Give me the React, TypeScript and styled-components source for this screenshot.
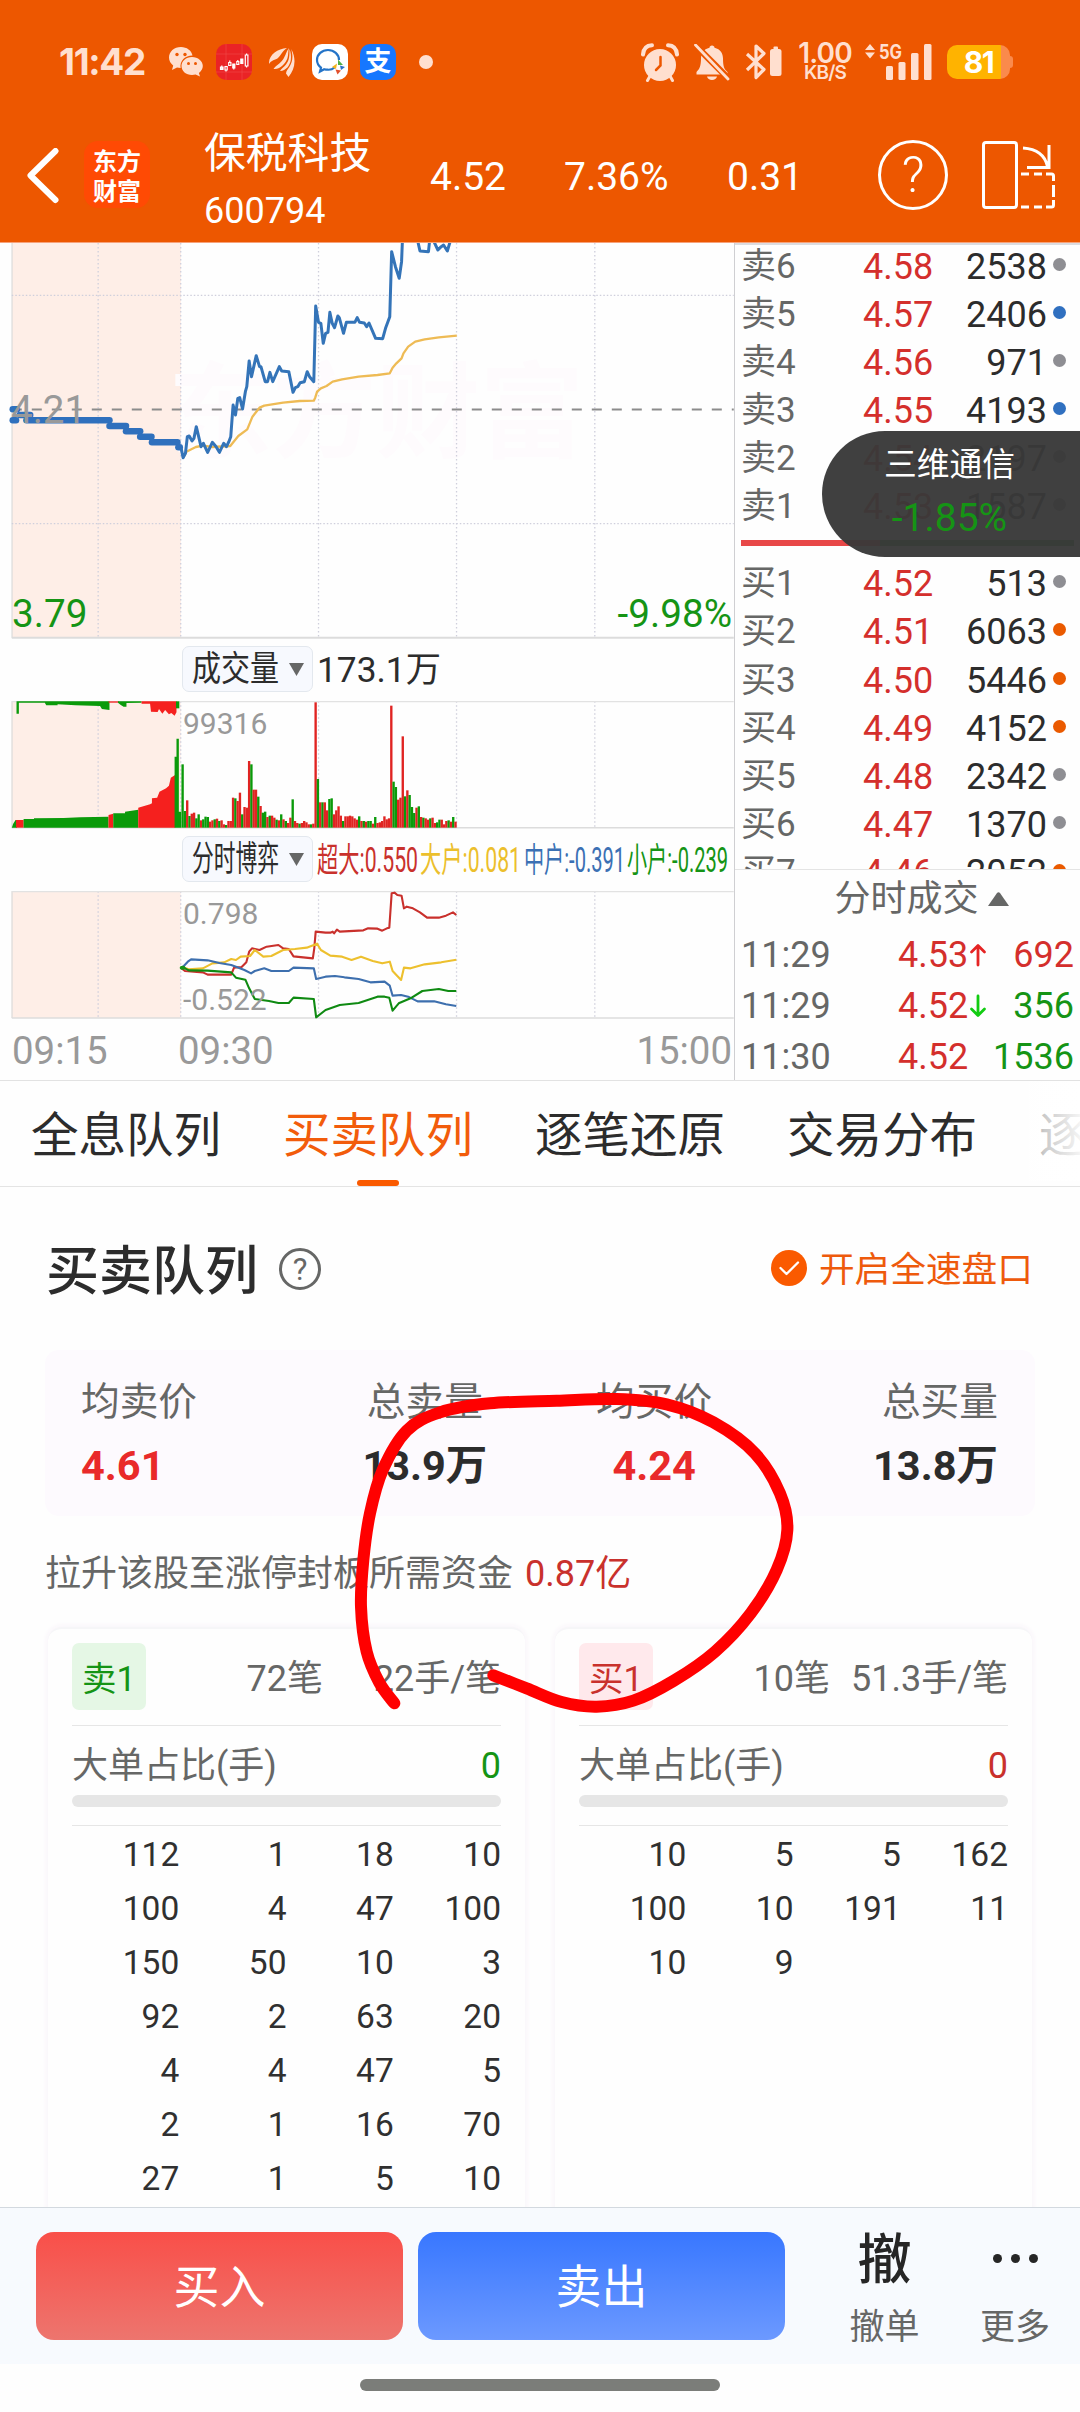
import React from "react";
import styled, { createGlobalStyle, css } from "styled-components";

const RED = "#c9312c";
const PRICE_RED = "#d42f2c";
const GREEN = "#159415";
const ORANGE = "#ed5700";
const GREY = "#666766";
const INK = "#2c2c2c";

const GlobalStyle = createGlobalStyle`
  html, body { margin: 0; padding: 0; background: #fff; }
  * { box-sizing: border-box; }
  body { font-family: Roboto, "Noto Sans CJK SC", sans-serif; }
`;

const Screen = styled.div`
  position: relative;
  width: 1080px;
  height: 2412px;
  overflow: hidden;
  display: flex;
  flex-direction: column;
  background: #fefefe;
  color: ${INK};
`;

/* ---------- status bar ---------- */

const StatusBar = styled.div`
  height: 124px;
  flex: none;
  display: flex;
  align-items: center;
  padding: 0 70px 0 59px;
  background: ${ORANGE};
  color: #ffdfcf;
`;

const Clock = styled.span`
  width: 109px;
  font: 700 37px/46px Inter, sans-serif;
  letter-spacing: -1.3px;
`;

const StatusGroup = styled.div<{ $gap: number }>`
  display: flex;
  align-items: center;
  gap: ${(p) => p.$gap}px;
`;

const Spacer = styled.div<{ $w?: number }>`
  flex: ${(p) => (p.$w ? `0 0 ${p.$w}px` : "1")};
`;

const AppTile = styled.div<{ $bg: string }>`
  width: 36px;
  height: 36px;
  border-radius: 10px;
  display: flex;
  align-items: center;
  justify-content: center;
  background: ${(p) => p.$bg};
`;

const StatusDot = styled.div`
  width: 14px;
  height: 14px;
  border-radius: 50%;
  background: #ffdfcf;
`;

const Speed = styled.div`
  width: 56px;
  display: flex;
  flex-direction: column;
  align-items: center;
  font-family: Inter, sans-serif;
  font-weight: 600;
  white-space: nowrap;
`;
const SpeedValue = styled.span`
  font-size: 28px;
  line-height: 21px;
  letter-spacing: -0.8px;
`;
const SpeedUnit = styled.span`
  font-size: 19px;
  line-height: 17px;
  letter-spacing: -0.8px;
`;

const Battery = styled.div`
  position: relative;
  width: 63px;
  height: 34px;
  border-radius: 10px;
  background: linear-gradient(90deg, #ffb300 0 54px, #fa8a4c 54px);
  color: #fff;
  font: 700 30px/34px Inter, sans-serif;
  letter-spacing: -1.5px;
  text-align: center;
  &::after {
    content: "";
    position: absolute;
    right: -3px;
    top: 11px;
    width: 3px;
    height: 12px;
    border-radius: 0 3px 3px 0;
    background: #fa8a4c;
  }
`;

/* ---------- title bar ---------- */

const TitleBar = styled.div`
  height: 119px;
  flex: none;
  display: flex;
  align-items: center;
  padding: 0 24px 15px 26px;
  background: ${ORANGE};
  color: #fff;
  border-bottom: 1px solid #f7a27a;
`;

const Brand = styled.div`
  width: 66px;
  height: 67px;
  margin: -2px 0 0 24px;
  border-radius: 14px;
  background: #ff4a04;
  display: flex;
  flex-direction: column;
  align-items: center;
  justify-content: center;
  font: 700 24px/30px "Noto Sans CJK SC", sans-serif;
`;

const StockName = styled.div`
  align-self: flex-start;
  width: 226px;
  margin-left: 54px;
  font-size: 41.8px;
  line-height: 60px;
  white-space: nowrap;
`;
const StockCode = styled.div`
  font-size: 36px;
  line-height: 55px;
`;
const HeadNumber = styled.div<{ $w: number }>`
  width: ${(p) => p.$w}px;
  padding-top: 2px;
  font-size: 39px;
  line-height: 46px;
`;
const HelpRing = styled.div`
  width: 70px;
  height: 70px;
  margin-top: -2px;
  border: 3px solid #fff;
  border-radius: 50%;
  text-align: center;
  font-size: 50px;
  font-weight: 300;
  line-height: 64px;
`;

/* ---------- quote area ---------- */

const QuoteArea = styled.div`
  height: 838px;
  flex: none;
  display: flex;
  border-bottom: 1px solid #e2e2e2;
`;

const ChartColumn = styled.div`
  width: 735px;
  border-right: 1px solid #cfcfd2;
  display: flex;
  flex-direction: column;
`;

const ChartBox = styled.div<{ $h: number }>`
  position: relative;
  height: ${(p) => p.$h}px;
  flex: none;
  svg { display: block; width: 734px; height: 100%; }
`;

const ChartLabel = styled.span<{ $size: number; $color: string; $top: number; $left?: number; $right?: number }>`
  position: absolute;
  top: ${(p) => p.$top}px;
  left: ${(p) => (p.$left === undefined ? "auto" : `${p.$left}px`)};
  right: ${(p) => (p.$right === undefined ? "auto" : `${p.$right}px`)};
  font-size: ${(p) => p.$size}px;
  line-height: ${(p) => p.$size}px;
  color: ${(p) => p.$color};
  white-space: nowrap;
`;
const Watermark = styled.span`
  position: absolute;
  left: 168px;
  top: 92px;
  font: 700 104px/140px "Noto Sans CJK SC", sans-serif;
  color: #fefbfd;
`;

const IndicatorRow = styled.div<{ $h: number; $pad: number }>`
  height: ${(p) => p.$h}px;
  flex: none;
  display: flex;
  align-items: flex-start;
  padding: ${(p) => p.$pad}px 0 0 182px;
`;

const Picker = styled.div`
  width: 131px;
  height: 46px;
  margin-right: 4px;
  padding: 0 8px 0 9px;
  border: 1px solid #e3e8ee;
  border-radius: 7px;
  background: #f7f9fe;
  display: flex;
  align-items: center;
  justify-content: space-between;
`;

const SqueezeBox = styled.span<{ $w: number }>`
  display: block;
  width: ${(p) => p.$w}px;
  height: 46px;
  line-height: 48px;
  white-space: nowrap;
`;
const SqueezeText = styled.span<{ $size: number; $scale: number; $color: string }>`
  display: inline-block;
  font-size: ${(p) => p.$size}px;
  color: ${(p) => p.$color};
  transform: scaleX(${(p) => p.$scale});
  transform-origin: 0 50%;
`;

const TimeAxis = styled.div`
  flex: 1;
  display: grid;
  grid-template-columns: 166px 1fr auto;
  padding: 10px 2px 0 12px;
  font-size: 38.4px;
  line-height: 44px;
  color: #999;
`;

/* ---------- order book ---------- */

const BookColumn = styled.div`
  flex: 1;
  display: flex;
  flex-direction: column;
  border-top: 2px solid #dcdce0;
`;

const BookList = styled.div`
  height: 625px;
  flex: none;
  overflow: hidden;
  border-bottom: 1px solid #e4e4e4;
`;

const BookRow = styled.div`
  height: 48.1px;
  display: grid;
  grid-template-columns: 121px 78px 106px 1fr;
  align-items: center;
  padding: 0 0 4.5px 7px;
  font-size: 36px;
  line-height: 40px;
`;
const Side = styled.span`
  font-size: 35px;
  margin-left: -1px;
  color: ${GREY};
`;
const Price = styled.span`
  color: ${PRICE_RED};
`;
const Volume = styled.span`
  text-align: right;
  color: ${INK};
`;
const LevelDot = styled.span<{ $c: string }>`
  width: 13px;
  height: 13px;
  margin: -5px 0 0 6px;
  border-radius: 50%;
  background: ${(p) => p.$c};
`;

const RatioBar = styled.div`
  height: 6px;
  margin: 6px 6px 17px 6px;
  background: linear-gradient(90deg, #e84848 0 139px, #1a8a1a 139px);
`;

const TradesTitle = styled.div`
  height: 58px;
  flex: none;
  display: flex;
  align-items: center;
  justify-content: center;
  gap: 9px;
  padding: 0 0 0 28px;
  font-size: 36px;
  line-height: 56px;
  color: ${GREY};
`;
const TradeRow = styled.div`
  height: 51px;
  flex: none;
  display: grid;
  grid-template-columns: 157px 71px 1fr auto;
  align-items: center;
  padding: 2px 6px 0 6px;
  font-size: 36px;
  line-height: 42px;
`;
const TradeTime = styled.span`
  color: ${GREY};
`;
const TradeVolume = styled.span<{ $c: string }>`
  color: ${(p) => p.$c};
`;

const FloatingQuote = styled.div`
  position: absolute;
  right: 0;
  top: 431px;
  width: 258px;
  height: 126px;
  padding: 4px 3px 0 0;
  border-radius: 63px 0 0 63px;
  background: rgba(57, 57, 57, 0.965);
  text-align: center;
  color: #fff;
`;
const FloatingName = styled.div`
  font-size: 32.8px;
  line-height: 60px;
`;
const FloatingChange = styled.div`
  font-size: 39px;
  line-height: 46px;
  color: ${GREEN};
`;

/* ---------- tabs ---------- */

const Tabs = styled.div`
  position: relative;
  height: 106px;
  flex: none;
  display: flex;
  gap: 62px;
  padding-left: 31px;
  overflow: hidden;
  border-bottom: 1px solid #e4e4e4;
  &::after {
    content: "";
    position: absolute;
    right: 0;
    top: 0;
    width: 80px;
    height: 100px;
    background: linear-gradient(90deg, rgba(255, 255, 255, 0), rgba(255, 255, 255, 0.75) 55%, rgba(255, 255, 255, 0.95));
  }
`;
const Tab = styled.div<{ $on?: boolean }>`
  flex: none;
  display: flex;
  flex-direction: column;
  align-items: center;
  font-size: 47.5px;
  line-height: 99px;
  padding-top: 6px;
  height: 105px;
  color: ${(p) => (p.$on ? "#f25c0b" : INK)};
  ${(p) =>
    p.$on &&
    css`
      &::after {
        content: "";
        width: 42px;
        height: 6px;
        flex: none;
        margin-top: -6px;
        border-radius: 3px;
        background: #fa5a00;
      }
    `}
`;

/* ---------- queue section ---------- */

const Section = styled.div`
  flex: 1;
  min-height: 0;
  overflow: hidden;
  padding: 0 45px;
`;
const SectionHead = styled.div`
  height: 163px;
  display: flex;
  align-items: center;
  padding: 0 2px 0 3px;
`;
const SectionTitle = styled.h2`
  margin: 7px 21px 0 -2px;
  font-size: 53px;
  font-weight: 500;
  line-height: 60px;
`;
const SmallRing = styled.span`
  width: 42px;
  height: 42px;
  border: 3px solid ${GREY};
  border-radius: 50%;
  text-align: center;
  font-size: 31px;
  line-height: 37px;
  color: ${GREY};
`;
const SpeedToggle = styled.div`
  margin-left: auto;
  padding-top: 4px;
  display: flex;
  align-items: center;
  gap: 12px;
  font-size: 35.7px;
  line-height: 43px;
  color: #ee5a0c;
  svg { margin-top: -6px; }
`;

const Summary = styled.div`
  height: 166px;
  display: grid;
  grid-template-columns: repeat(4, 229.25px);
  padding: 22px 0 0 36px;
  border-radius: 14px;
  background: #fdfafe;
`;
const SummaryCell = styled.div<{ $align: string }>`
  text-align: ${(p) => p.$align};
`;
const SummaryLabel = styled.div`
  font-size: 38.7px;
  line-height: 60px;
  color: ${GREY};
`;
const SummaryValue = styled.div<{ $c: string }>`
  font-size: 41.5px;
  font-weight: 700;
  line-height: 68px;
  color: ${(p) => p.$c};
`;
const Hint = styled.p`
  margin: 0;
  height: 111px;
  line-height: 116px;
  font-size: 36px;
  color: ${GREY};
  em {
    font-style: normal;
    color: ${RED};
    margin-left: 12px;
  }
`;

const Cards = styled.div`
  display: grid;
  grid-template-columns: 477px 477px;
  gap: 30px;
  padding: 0 3px;
`;
const Card = styled.div`
  height: 640px;
  padding: 14px 24px 0;
  border-radius: 14px;
  border-top: 2px solid #f6f6f8;
  background: #fefefe;
  box-shadow: 0 0 5px 2px #f9f5fa;
`;
const CardHead = styled.div`
  height: 83px;
  display: grid;
  grid-template-columns: 74px 177px 1fr;
  text-align: right;
  line-height: 73px;
  font-size: 36px;
  color: ${GREY};
  border-bottom: 1px solid #e6e6e6;
`;
const Badge = styled.span<{ $sell: boolean }>`
  width: 74px;
  height: 67px;
  border-radius: 7px;
  text-align: center;
  font-size: 34.5px;
  line-height: 72px;
  color: ${(p) => (p.$sell ? GREEN : RED)};
  background: ${(p) => (p.$sell ? "#e5f7e5" : "#ffe9ec")};
`;
const BigShare = styled.div`
  height: 69px;
  padding-top: 7px;
  display: flex;
  justify-content: space-between;
  font-size: 36px;
  line-height: 66px;
  color: ${GREY};
`;
const BigValue = styled.span<{ $c: string }>`
  color: ${(p) => p.$c};
`;
const Track = styled.div`
  height: 12px;
  border-radius: 6px;
  background: #e6e6e6;
`;
const Lots = styled.div`
  display: grid;
  grid-template-columns: repeat(4, 1fr);
  margin-top: 18px;
  padding-top: 2px;
  border-top: 1px solid #e6e6e6;
  text-align: right;
  font-size: 33.5px;
  line-height: 54px;
  color: #303030;
`;

/* ---------- bottom ---------- */

const TradeBar = styled.div`
  height: 157px;
  flex: none;
  display: flex;
  align-items: flex-start;
  padding: 24px 0 0 36px;
  background: #f7fafe;
  border-top: 1px solid #d3d9df;
`;
const TradeButton = styled.button<{ $from: string; $to: string }>`
  width: 367px;
  height: 108px;
  margin: 0 15px 0 0;
  padding: 3px 0 0;
  border: 0;
  border-radius: 18px;
  background: linear-gradient(${(p) => p.$from}, ${(p) => p.$to});
  color: #fff;
  font: 46px/105px Roboto, "Noto Sans CJK SC", sans-serif;
`;
const Action = styled.div<{ $w: number }>`
  width: ${(p) => p.$w}px;
  display: flex;
  flex-direction: column;
  align-items: center;
  font-size: 35px;
  line-height: 43px;
  color: ${GREY};
`;
const ActionMark = styled.div`
  height: 74px;
  font-size: 54px;
  font-weight: 500;
  line-height: 57px;
  color: #262626;
`;
const DotRow = styled.div`
  display: flex;
  gap: 9px;
  height: 74px;
  padding-top: 22px;
  i { width: 9px; height: 9px; border-radius: 50%; background: #262626; }
`;
const HomeArea = styled.div`
  height: 48px;
  flex: none;
  display: flex;
  justify-content: center;
  padding-top: 15px;
`;
const HomeBar = styled.div`
  width: 360px;
  height: 12px;
  border-radius: 6px;
  background: #7b7d79;
`;

const Annotation = styled.svg`
  position: absolute;
  left: 340px;
  top: 1380px;
  pointer-events: none;
`;

/* ---------- data ---------- */

type Level = [string, string, string, string];
const DOT: Record<string, string> = { g: "#8e8e93", b: "#3070c0", o: "#ea5a00" };

const SELLS: Level[] = [
  ["卖6", "4.58", "2538", "g"],
  ["卖5", "4.57", "2406", "b"],
  ["卖4", "4.56", "971", "g"],
  ["卖3", "4.55", "4193", "b"],
  ["卖2", "4.54", "2197", "g"],
  ["卖1", "4.53", "1587", "g"],
];
const BUYS: Level[] = [
  ["买1", "4.52", "513", "g"],
  ["买2", "4.51", "6063", "o"],
  ["买3", "4.50", "5446", "o"],
  ["买4", "4.49", "4152", "o"],
  ["买5", "4.48", "2342", "g"],
  ["买6", "4.47", "1370", "g"],
  ["买7", "4.46", "2052", "o"],
];

const LEGEND: [string, string][] = [
  ["超大:0.550", RED],
  ["大户:0.081", "#ecbf2c"],
  ["中户:-0.391", "#3b70b4"],
  ["小户:-0.239", GREEN],
];

const SELL_LOTS = "112 1 18 10 100 4 47 100 150 50 10 3 92 2 63 20 4 4 47 5 2 1 16 70 27 1 5 10".split(" ");
const BUY_LOTS = "10 5 5 162 100 10 191 11 10 9".split(" ");

const PRICE_LINE =
  "384,640 388,668 393,655 397,605 401,603 407,618 411,610 416,575 421,605 426,635 431,625 440,652 450,622 458,635 465,652 474,625 480,635 485,620 489,605 494,510 499,540 504,490 508,488 514,522 520,470 523,455 528,378 533,425 543,362 550,395 553,395 562,440 567,440 572,412 578,440 592,395 597,408 612,410 621,472 626,458 631,455 636,443 645,440 651,410 656,425 665,440 669,213 675,262 680,265 685,325 690,295 695,292 699,232 704,265 709,278 716,243 719,248 728,295 734,262 752,262 757,248 762,262 772,264 777,275 782,264 796,310 811,311 817,280 826,245 830,50 838,95 846,130 851,80 853,10 884,10 890,48 908,50 911,10 918,15 928,45 935,35 940,30 948,48 956,10";
const AVERAGE_LINE =
  "388,668 395,650 415,636 430,632 450,636 488,633 505,603 524,583 535,545 550,518 560,512 600,503 635,498 665,497 668,488 672,470 680,460 692,453 705,440 725,433 760,425 800,420 826,415 832,398 840,385 851,370 855,355 865,335 880,320 900,313 930,307 968,302";
const AUCTION_STEPS: [number, number, number][] = [
  [27, 36, 523], [42, 64, 540], [27, 34, 556], [56, 232, 556], [232, 267, 573],
  [267, 297, 589], [297, 321, 605], [322, 376, 622], [378, 381, 637],
];

const VOLUMES =
  "190g 50g 82r 35g 42r 45r 28g 40g 22r 25g 33g 32g 18r 22r 25g 27r 20g 22r 10r 8g 20r 20r 90r 88g 80r 105r 40g 62r 60r 200r 190g 114r 114r 93g 65r 45g 48g 32r 36g 36r 30r 24g 22r 40g 25r 20g 14r 30r 85g 20r 14r 12g 14r 20r 16r 10r 10g 12r 376r 146g 76r 76g 76r 52r 86g 88g 40r 52r 64r 36r 20g 34r 34r 36r 34r 28r 24r 34g 20r 20g 18r 20g 20g 12r 32g 14r 16r 20r 34r 25r 28r 366r 138g 122g 84r 90r 274r 94g 112r 98g 62g 44g 60r 64g 32r 30g 28r 24r 28g 30r 14r 16g 24g 24r 10r 20r 22g 18r 32g 18r".split(" ");

const BAR_RED = "#f5201e";
const BAR_GREEN = "#0a9a0a";

const AUCTION_AREA: [string, string][] = [
  [BAR_GREEN, "25,578 28,566 33,555 36,555 36,578"],
  [BAR_RED, "34,578 34,555 50,555 50,578"],
  [BAR_GREEN, "50,578 50,552 72,552 72,550 135,549 170,547 230,545 230,578"],
  [BAR_RED, "230,578 230,540 240,536 240,578"],
  [BAR_GREEN, "240,578 240,535 265,535 265,530 293,524 293,578"],
  [BAR_RED, "293,578 293,518 318,508 322,505 322,490 333,488 338,470 352,460 358,452 362,428 371,420 371,578"],
  [BAR_GREEN, "370,578 370,365 374,365 374,311 379,311 379,530 384,530 384,578"],
  [BAR_GREEN, "25,199 35,199 35,236 40,236 40,203 95,203 98,211 122,211 122,208 160,211 212,213 216,222 232,225 232,199"],
  [BAR_RED, "230,199 230,203 252,203 252,199"],
  [BAR_GREEN, "250,199 250,203 256,210 262,215 268,215 268,204 300,203 300,199"],
  [BAR_RED, "300,199 300,206 318,206 320,230 334,231 337,222 344,236 350,225 358,238 363,234 370,242 374,232 374,199"],
  [BAR_GREEN, "373,199 373,220 380,220 380,199"],
];

const FLOW_LINES: [string, string][] = [
  ["#c9302c", "385,1000 392,1008 430,1012 440,1019 490,1019 496,998 512,996 522,982 528,950 534,940 550,945 565,935 590,930 600,940 612,942 622,964 663,970 666,940 669,890 690,893 700,893 705,890 708,895 714,884 720,890 770,886 780,880 800,881 810,887 820,880 825,878 830,775 836,773 842,780 851,782 856,820 862,815 875,820 890,832 905,848 930,848 945,842 960,832 967,840"],
  ["#edc02e", "387,997 400,1003 430,1000 450,985 475,982 490,972 500,975 510,965 530,963 540,945 558,965 575,963 600,945 625,942 650,938 672,926 680,945 700,962 725,965 745,975 765,965 790,978 810,985 826,980 832,1008 850,1035 856,998 870,1000 900,988 935,982 967,974"],
  ["#3d6fae", "387,997 398,980 405,973 440,976 465,984 490,990 500,995 518,1005 532,1015 540,1008 560,1000 575,1008 612,1008 622,998 665,1000 670,1032 690,1025 710,1023 730,1027 760,1032 785,1042 815,1040 826,1052 832,1082 850,1080 865,1085 885,1099 920,1099 945,1108 967,1113"],
  ["#0f8a12", "385,995 400,1006 440,1007 490,1012 500,1028 520,1034 528,1060 540,1092 570,1098 590,1104 612,1104 622,1088 665,1092 670,1147 690,1125 720,1110 760,1104 800,1085 815,1085 825,1088 832,1127 845,1105 870,1090 895,1068 930,1062 950,1068 967,1068"],
];

const LOOP: [number, number][] = [
  [163, 970], [118, 908], [80, 815], [63, 680], [70, 540], [90, 400], [128, 270], [200, 152], [300, 97],
  [450, 70], [650, 62], [830, 57], [980, 73], [1120, 127], [1245, 220], [1320, 340], [1342, 450],
  [1310, 570], [1232, 700], [1125, 815], [1000, 903], [880, 962], [770, 980], [665, 966], [560, 925], [460, 886],
];

/* Catmull-Rom spline through the given points */
function spline(pts: [number, number][]) {
  let d = `M${pts[0][0]} ${pts[0][1]}`;
  for (let i = 0; i < pts.length - 1; i++) {
    const a = pts[Math.max(0, i - 1)];
    const b = pts[i];
    const c = pts[i + 1];
    const e = pts[Math.min(pts.length - 1, i + 2)];
    d += `C${b[0] + (c[0] - a[0]) / 6} ${b[1] + (c[1] - a[1]) / 6} ${c[0] - (e[0] - b[0]) / 6} ${c[1] - (e[1] - b[1]) / 6} ${c[0]} ${c[1]}`;
  }
  return d;
}

/* ---------- drawings ---------- */

const WeChat = () => (
  <svg width="36" height="32" viewBox="0 0 36 32" fill="#ffdfcf">
    <path d="M13 1C6 1 1 5.700 1 11.500c0 3.300 1.600 6 4.200 8L4 24l5-2.600c1.300.300 2.400.500 3.600.500C11.500 15 17 9.500 24.500 9.500 23.500 4.500 18.800 1 13 1z" />
    <path d="M24 11c-6 0-10.500 4-10.500 9s4.500 9 10.500 9c1.300 0 2.500-.200 3.600-.500L32 30.500l-1.100-3.600c2.400-1.700 3.900-4.100 3.900-6.900 0-5-4.800-9-10.800-9z" />
    <g fill={ORANGE}>
      <circle cx="9" cy="8.500" r="1.700" />
      <circle cx="17" cy="8.500" r="1.700" />
      <circle cx="20.500" cy="17.500" r="1.500" />
      <circle cx="27.500" cy="17.500" r="1.500" />
    </g>
  </svg>
);

const Candles = () => (
  <svg width="36" height="36" viewBox="0 0 36 36" fill="none" stroke="#fff" strokeWidth="1.200">
    <path d="M0 10h36M0 28h36M10 0v36M26 0v36" stroke="#f04a49" strokeWidth=".6" />
    <path d="M4.500 23h2.500v2.500H4.500zM5.800 21.500v4" />
    <path d="M9 22.500h2.200v3.500H9zM10 26v1.500M12.700 18.500h2.200v3h-2.200zM13.800 16.500v2" />
    <path d="M16.800 20h2v4h-2zM17.800 24v1.500" fill="#fff" />
    <path d="M20.800 17.500h2v3h-2zM21.800 16v1.500" />
    <path d="M24.800 15h2v4.500h-2z" fill="#fff" />
    <path d="M29.300 11h2.600v11h-2.600zM30.600 9.500V11M30.600 22v1.500" />
  </svg>
);

const Wing = () => (
  <svg width="27" height="31" viewBox="0 0 27 31" fill="#ffdfcf">
    <path d="M0 17C-.5 8 8 2 18 1c-5 3-5.500 7-9 10-2.500 2.200-7 2-9 6z" />
    <path d="M20 1c-3 4-3 7-6 11.500S7 18 4.500 22C11 23 17 16 18.500 11c1-4 .5-7 1.500-10z" />
    <path d="M20.500 2c0 7 0 11-3.500 15.500-2 2.500-4.500 4-6 6.500 6 0 10-6 10.800-11 .5-4 0-8-1.300-11z" />
    <path d="M22.300 2c2 8 1.300 13-2 18-1.300 2-3 3.500-3.300 6.500l2.500 3.500c6-7 8.500-17 2.800-28z" />
  </svg>
);

const WeCom = () => (
  <svg width="32" height="30" viewBox="0 0 32 30" fill="none">
    <path d="M20.500 20.500c-2 1.800-4.200 2.500-7 2.200-1.300 0-2.300-.200-3.300-.500L6 24.500l1-3.800C4.300 18.500 3 15.800 3 13 3 7.200 8 3 14 3s11 4.200 11 10" stroke="#2474c8" strokeWidth="2.200" />
    <path d="M18 20l5-3.500-1 5.500z" fill="#f5b41a" />
    <path d="M24 12.500l5 5.500h-5z" fill="#4fae45" />
    <path d="M26 18.500l5 1.500-4 3z" fill="#2a70c8" />
    <path d="M21.500 22.500l5.500 1-3.500 4z" fill="#e2502c" />
  </svg>
);

const Alipay = styled.span`
  font: 700 27px/40px "Noto Sans CJK SC", sans-serif;
  margin-top: -4px;
  color: #fff;
`;

const Alarm = () => (
  <svg width="38" height="39" viewBox="0 0 38 39" fill="#ffdfcf">
    <circle cx="19" cy="22" r="16" />
    <path d="M2 11.500C2.500 5.500 6 2.500 11 2.300M36 11.500C35.500 5.500 32 2.500 27 2.300" stroke="#ffdfcf" strokeWidth="4" fill="none" strokeLinecap="round" />
    <path d="M9 33l-2.500 4.500M29 33l2.500 4.500" stroke="#ffdfcf" strokeWidth="3" strokeLinecap="round" />
    <path d="M19.500 14v8.500L15 27" stroke={ORANGE} strokeWidth="2.500" fill="none" strokeLinecap="round" />
  </svg>
);

const BellOff = () => (
  <svg width="36" height="37" viewBox="0 0 36 37" fill="#ffdfcf">
    <path d="M18 1.500c-1.500 0-2.500 1-2.500 2.200C9.500 5 7 9.500 7 14.500 7 22 5.500 25 2.500 28v2.500h31V28C30 25 29 22 29 14.500c0-5-2.500-9.500-8.500-10.800 0-1.200-1-2.200-2.500-2.200zM13 32.500c.5 2 2.500 3.500 5 3.500s4.500-1.500 5-3.500z" />
    <path d="M-1 -1L36 36" stroke={ORANGE} strokeWidth="6.500" />
    <path d="M1.500 1L34 35" stroke="#ffdfcf" strokeWidth="2.800" strokeLinecap="round" />
  </svg>
);

const Bluetooth = () => (
  <svg width="37" height="38" viewBox="0 0 37 38" fill="none" stroke="#ffdfcf" strokeWidth="3.200">
    <path d="M2 11l17 15.500L11 34.500V3l8 7.500L2 27" strokeLinejoin="round" />
    <rect x="25" y="6" width="11.500" height="27" rx="2.500" fill="#ffdfcf" stroke="none" />
    <rect x="28.500" y="3.500" width="4.500" height="4" rx="1" fill="#ffdfcf" stroke="none" />
  </svg>
);

const Signal = () => (
  <svg width="68" height="38" viewBox="0 0 68 38" fill="#ffdfcf">
    <path d="M1 7l5-6 5 6zM1 9.500l5 6 5-6z" />
    <text x="15" y="16" fontFamily="Inter, sans-serif" fontWeight="700" fontSize="19.500" textLength="23" lengthAdjust="spacingAndGlyphs">5G</text>
    <rect x="22" y="23" width="7" height="14" rx="1.500" />
    <rect x="34.500" y="19" width="7" height="18" rx="1.500" />
    <rect x="47" y="10" width="7.500" height="27" rx="1.500" />
    <rect x="60" y="1" width="7.500" height="36" rx="1.500" />
  </svg>
);

const Back = () => (
  <svg width="34" height="56" viewBox="0 0 34 56" fill="none" stroke="#fff" strokeWidth="6" strokeLinecap="round" strokeLinejoin="round">
    <path d="M29.500 3L4.500 27.500l25 24.500" />
  </svg>
);

const Rotate = styled.svg`
  margin: -2px 0 0 34px;
`;

const Grid = ({ top, bottom }: { top: number; bottom: number }) => (
  <>
    {[208, 383, 675, 967.5, 1260.5].map((x) => (
      <line key={x} x1={x} x2={x} y1={top} y2={bottom} stroke="#cfcfdc" strokeDasharray="1.500 2.500" strokeWidth="1.300" vectorEffect="non-scaling-stroke" />
    ))}
    <line x1="25.500" x2="25.500" y1={top} y2={bottom} stroke="#dadada" strokeWidth="1.200" vectorEffect="non-scaling-stroke" />
  </>
);

const Frame = ({ top, bottom }: { top: number; bottom: number }) => (
  <>
    <rect x="25" y={top} width="358" height={bottom - top} fill="#feeee7" />
    <Grid top={top} bottom={bottom} />
  </>
);

const line = { fill: "none", vectorEffect: "non-scaling-stroke", strokeLinejoin: "round" } as const;

function PriceChart() {
  return (
    <svg viewBox="0 24 1555.500 1191" preserveAspectRatio="none">
      <Grid top={24} bottom={1208} />
      {[181, 866].map((y) => (
        <line key={y} x1="25" x2="1555" y1={y} y2={y} stroke="#cfcfdc" strokeDasharray="1.500 2" strokeWidth="1.300" vectorEffect="non-scaling-stroke" />
      ))}
      <line x1="25" x2="1555" y1="523.500" y2="523.500" stroke="#8c8c8c" strokeDasharray="10 10" strokeWidth="2" vectorEffect="non-scaling-stroke" />
      <polyline points={AVERAGE_LINE} {...line} stroke="#eebb55" strokeWidth="2.300" />
      {AUCTION_STEPS.map(([a, b, y]) => (
        <line key={`${a}-${y}`} x1={a} x2={b} y1={y} y2={y} stroke="#2f70bd" strokeWidth="6.500" strokeLinecap="round" vectorEffect="non-scaling-stroke" />
      ))}
      <polyline points={PRICE_LINE} {...line} stroke="#3474b8" strokeWidth="3" />
      <line x1="25" x2="1555" y1="1208.500" y2="1208.500" stroke="#dcdcdc" strokeWidth="2" vectorEffect="non-scaling-stroke" />
    </svg>
  );
}

function VolumeChart() {
  return (
    <svg viewBox="0 198 1555.500 384" preserveAspectRatio="none">
      <Frame top={199} bottom={578} />
      <line x1="25" x2="1555" y1="200" y2="200" stroke="#e2e2e2" strokeWidth="1.200" vectorEffect="non-scaling-stroke" />
      <line x1="25" x2="1555" y1="578.500" y2="578.500" stroke="#dcdcdc" strokeWidth="1.500" vectorEffect="non-scaling-stroke" />
      {AUCTION_AREA.map(([c, p]) => (
        <polygon key={p} points={p} fill={c} />
      ))}
      {VOLUMES.map((v, i) => {
        const h = parseInt(v, 10);
        return <rect key={i} x={384.5 + i * 4.86} y={578 - h} width="5" height={h} fill={v.endsWith("r") ? "#e02422" : BAR_GREEN} />;
      })}
    </svg>
  );
}

function FlowChart() {
  return (
    <svg viewBox="0 768 1555.500 384" preserveAspectRatio="none">
      <Frame top={769} bottom={1149} />
      <line x1="25" x2="1555" y1="770" y2="770" stroke="#e2e2e2" strokeWidth="1.200" vectorEffect="non-scaling-stroke" />
      <line x1="25" x2="1555" y1="1149" y2="1149" stroke="#dcdcdc" strokeWidth="1.500" vectorEffect="non-scaling-stroke" />
      {FLOW_LINES.map(([c, p]) => (
        <polyline key={c} points={p} {...line} stroke={c} strokeWidth="2.100" />
      ))}
      <circle cx="387" cy="998" r="6" fill={GREEN} />
    </svg>
  );
}

const PinkBack = styled.div`
  position: absolute;
  left: 12px;
  top: 0;
  width: 169px;
  height: 394px;
  background: #feeee7;
`;
const Layer = styled.div`
  position: absolute;
  inset: 0;
`;

const Caret = () => (
  <svg width="15" height="13" viewBox="0 0 15 13">
    <path d="M0 0h15L7.500 13z" fill={GREY} />
  </svg>
);

const Arrow = ({ up }: { up: boolean }) => (
  <svg width="18" height="24" viewBox="0 0 18 24" fill="none" stroke={up ? "#e52424" : "#12cc12"} strokeWidth="2.800" strokeLinecap="round" strokeLinejoin="round">
    <path d={up ? "M9 22V3M2.500 9L9 2.500 15.500 9" : "M9 2v19M2.500 15L9 21.500 15.500 15"} />
  </svg>
);

function Book({ rows }: { rows: Level[] }) {
  return (
    <>
      {rows.map(([side, price, vol, dot]) => (
        <BookRow key={side}>
          <Side>{side}</Side>
          <Price>{price}</Price>
          <Volume>{vol}</Volume>
          <LevelDot $c={DOT[dot]} />
        </BookRow>
      ))}
    </>
  );
}

function QueueCard({ sell, name, count, avg, lots }: { sell: boolean; name: string; count: string; avg: string; lots: string[] }) {
  return (
    <Card>
      <CardHead>
        <Badge $sell={sell}>{name}</Badge>
        <span>{count}</span>
        <span>{avg}</span>
      </CardHead>
      <BigShare>
        <span>大单占比(手)</span>
        <BigValue $c={sell ? GREEN : RED}>0</BigValue>
      </BigShare>
      <Track />
      <Lots>
        {lots.map((n, i) => (
          <span key={i}>{n}</span>
        ))}
      </Lots>
    </Card>
  );
}

export default function App() {
  return (
    <Screen lang="zh-CN">
      <GlobalStyle />
      <StatusBar>
        <Clock>11:42</Clock>
        <StatusGroup $gap={12}>
          <WeChat />
          <AppTile $bg="#ea2326"><Candles /></AppTile>
        </StatusGroup>
        <Spacer $w={17} />
        <Wing />
        <Spacer $w={16} />
        <StatusGroup $gap={12}>
          <AppTile $bg="#fff"><WeCom /></AppTile>
          <AppTile $bg="#1677ff"><Alipay>支</Alipay></AppTile>
        </StatusGroup>
        <Spacer $w={23} />
        <StatusDot />
        <Spacer />
        <StatusGroup $gap={15}>
          <Alarm />
          <BellOff />
          <Bluetooth />
          <Speed>
            <SpeedValue>1.00</SpeedValue>
            <SpeedUnit>KB/S</SpeedUnit>
          </Speed>
        </StatusGroup>
        <Spacer $w={11} />
        <Signal />
        <Spacer $w={15} />
        <Battery>81</Battery>
      </StatusBar>

      <TitleBar>
        <Back />
        <Brand>
          <span>东方</span>
          <span>财富</span>
        </Brand>
        <StockName>
          保税科技
          <StockCode>600794</StockCode>
        </StockName>
        <HeadNumber $w={134}>4.52</HeadNumber>
        <HeadNumber $w={163}>7.36%</HeadNumber>
        <HeadNumber $w={151}>0.31</HeadNumber>
        <HelpRing>?</HelpRing>
        <Rotate width="74" height="70" viewBox="0 0 74 70" fill="none" stroke="#fff" strokeWidth="3">
          <rect x="1.500" y="2.500" width="33" height="65" rx="2.500" />
          <path d="M41 8c14 1 22 7 24.500 18.500M67 5v23.500M45 27.500h23.500" />
          <path d="M39 34h8M52 34h8M64 34h5.500q2 0 2 2v5M71.500 45v12M71.500 60v5q0 2-2 2H64M52 67h8M39 67h8" />
        </Rotate>
      </TitleBar>

      <QuoteArea>
        <ChartColumn>
          <ChartBox $h={397}>
            <PinkBack />
            <Watermark>东方财富</Watermark>
            <Layer>
              <PriceChart />
            </Layer>
            <ChartLabel $size={38.5} $color="#999" $left={11} $top={148}>4.21</ChartLabel>
            <ChartLabel $size={38.7} $color={GREEN} $left={12} $top={352}>3.79</ChartLabel>
            <ChartLabel $size={38.7} $color={GREEN} $right={2} $top={352}>-9.98%</ChartLabel>
          </ChartBox>
          <IndicatorRow $h={61} $pad={6}>
            <Picker>
              <SqueezeBox $w={87}>
                <SqueezeText $size={35} $scale={0.83} $color={INK}>成交量</SqueezeText>
              </SqueezeBox>
              <Caret />
            </Picker>
            <SqueezeBox $w={130}>
              <SqueezeText $size={35.3} $scale={1} $color={INK}>173.1万</SqueezeText>
            </SqueezeBox>
          </IndicatorRow>
          <ChartBox $h={128}>
            <VolumeChart />
            <ChartLabel $size={30} $color="#999" $left={183} $top={8}>99316</ChartLabel>
          </ChartBox>
          <IndicatorRow $h={62} $pad={7}>
            <Picker>
              <SqueezeBox $w={87}>
                <SqueezeText $size={35} $scale={0.622} $color={INK}>分时博弈</SqueezeText>
              </SqueezeBox>
              <Caret />
            </Picker>
            {LEGEND.map(([t, c], i) => (
              <SqueezeBox key={t} $w={[103, 103.5, 103, 103][i]}>
                <SqueezeText $size={34.5} $scale={i < 2 ? 0.616 : 0.583} $color={c}>{t}</SqueezeText>
              </SqueezeBox>
            ))}
          </IndicatorRow>
          <ChartBox $h={128}>
            <FlowChart />
            <ChartLabel $size={30} $color="#999" $left={183} $top={8}>0.798</ChartLabel>
            <ChartLabel $size={30} $color="#999" $left={183} $top={94}>-0.522</ChartLabel>
          </ChartBox>
          <TimeAxis>
            <span>09:15</span>
            <span>09:30</span>
            <span>15:00</span>
          </TimeAxis>
        </ChartColumn>

        <BookColumn>
          <BookList>
            <Book rows={SELLS} />
            <RatioBar />
            <Book rows={BUYS} />
          </BookList>
          <TradesTitle>
            分时成交
            <svg width="21" height="14" viewBox="0 0 21 14">
              <path d="M0 14h21L12 1q-1.500-1.500-3 0z" fill={GREY} />
            </svg>
          </TradesTitle>
          <TradeRow>
            <TradeTime>11:29</TradeTime>
            <Price>4.53</Price>
            <Arrow up />
            <TradeVolume $c={PRICE_RED}>692</TradeVolume>
          </TradeRow>
          <TradeRow>
            <TradeTime>11:29</TradeTime>
            <Price>4.52</Price>
            <Arrow up={false} />
            <TradeVolume $c={GREEN}>356</TradeVolume>
          </TradeRow>
          <TradeRow>
            <TradeTime>11:30</TradeTime>
            <Price>4.52</Price>
            <span />
            <TradeVolume $c={GREEN}>1536</TradeVolume>
          </TradeRow>
        </BookColumn>
      </QuoteArea>

      <Tabs>
        <Tab>全息队列</Tab>
        <Tab $on>买卖队列</Tab>
        <Tab>逐笔还原</Tab>
        <Tab>交易分布</Tab>
        <Tab>逐</Tab>
      </Tabs>

      <Section>
        <SectionHead>
          <SectionTitle>买卖队列</SectionTitle>
          <SmallRing>?</SmallRing>
          <SpeedToggle>
            <svg width="36" height="36" viewBox="0 0 36 36">
              <circle cx="18" cy="18" r="18" fill="#fa5a00" />
              <path d="M9.500 18l6 6L27 12.500" fill="none" stroke="#fff" strokeWidth="2.300" strokeLinecap="round" strokeLinejoin="round" />
            </svg>
            开启全速盘口
          </SpeedToggle>
        </SectionHead>
        <Summary>
          <SummaryCell $align="left">
            <SummaryLabel>均卖价</SummaryLabel>
            <SummaryValue $c="#e92a2a">4.61</SummaryValue>
          </SummaryCell>
          <SummaryCell $align="center">
            <SummaryLabel>总卖量</SummaryLabel>
            <SummaryValue $c={INK}>13.9万</SummaryValue>
          </SummaryCell>
          <SummaryCell $align="center">
            <SummaryLabel>均买价</SummaryLabel>
            <SummaryValue $c="#e92a2a">4.24</SummaryValue>
          </SummaryCell>
          <SummaryCell $align="right">
            <SummaryLabel>总买量</SummaryLabel>
            <SummaryValue $c={INK}>13.8万</SummaryValue>
          </SummaryCell>
        </Summary>
        <Hint>
          拉升该股至涨停封板所需资金<em>0.87亿</em>
        </Hint>
        <Cards>
          <QueueCard sell name="卖1" count="72笔" avg="22手/笔" lots={SELL_LOTS} />
          <QueueCard sell={false} name="买1" count="10笔" avg="51.3手/笔" lots={BUY_LOTS} />
        </Cards>
      </Section>

      <TradeBar>
        <TradeButton $from="#f94f49" $to="#ed756e">买入</TradeButton>
        <TradeButton $from="#3877ff" $to="#6c99ff">卖出</TradeButton>
        <Action $w={169}>
          <ActionMark>撤</ActionMark>
          撤单
        </Action>
        <Action $w={92}>
          <DotRow>
            <i />
            <i />
            <i />
          </DotRow>
          更多
        </Action>
      </TradeBar>
      <HomeArea>
        <HomeBar />
      </HomeArea>

      <FloatingQuote>
        <FloatingName>三维通信</FloatingName>
        <FloatingChange>-1.85%</FloatingChange>
      </FloatingQuote>
      <Annotation width="470" height="340" viewBox="0 0 1410 1020">
        <path d={spline(LOOP)} fill="none" stroke="#ff0000" strokeWidth="36" strokeLinecap="round" />
      </Annotation>
    </Screen>
  );
}
